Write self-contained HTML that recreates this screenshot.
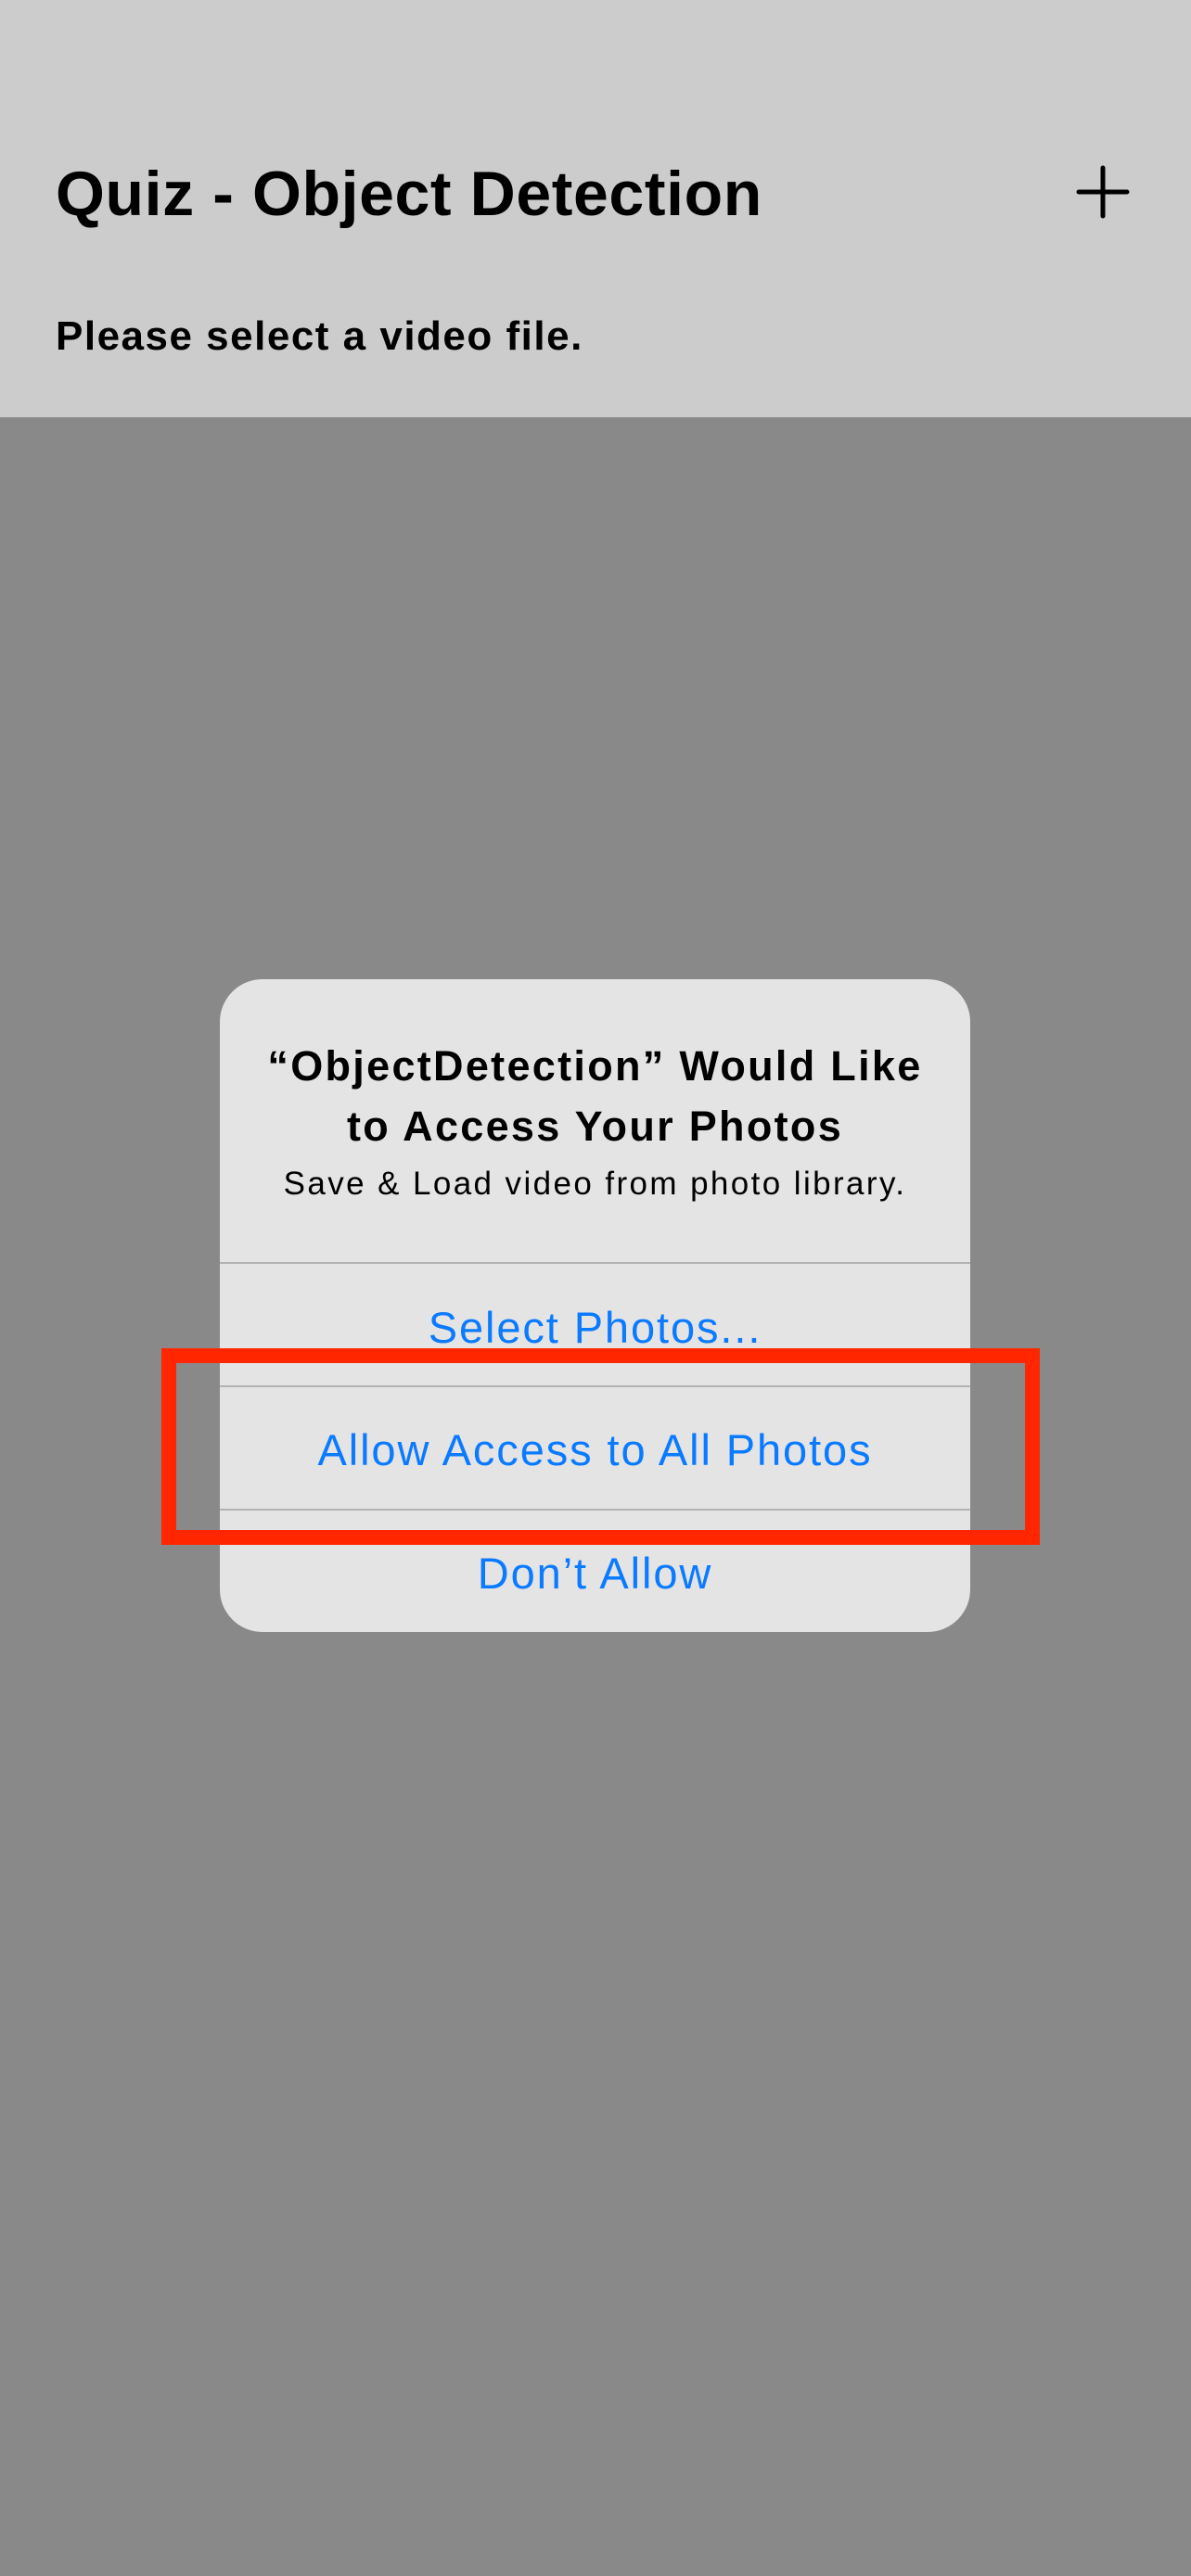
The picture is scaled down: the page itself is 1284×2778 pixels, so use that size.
<!DOCTYPE html>
<html><head><meta charset="utf-8"><style>
html,body{margin:0;padding:0;}
body{width:1284px;height:2778px;background:#898989;position:relative;overflow:hidden;font-family:"Liberation Sans",Arial,sans-serif;}
.t{position:absolute;line-height:1;white-space:nowrap;}
.c{left:237px;width:809px;text-align:center;}
</style></head><body>
<div style="position:absolute;left:0;top:0;width:1284px;height:450px;background:#cccccc;"></div>
<div class="t" style="left:60px;top:175px;font-size:68px;font-weight:bold;color:#000;letter-spacing:0.6px;">Quiz - Object Detection</div>
<svg style="position:absolute;left:1160px;top:178px" width="60" height="60"><path d="M29 3V55M3 29H55" stroke="#000" stroke-width="5" stroke-linecap="round"/></svg>
<div class="t" style="left:60px;top:341px;font-size:44px;font-weight:bold;color:#000;letter-spacing:1.5px;">Please select a video file.</div>

<div style="position:absolute;left:237px;top:1056px;width:809px;height:704px;background:#e4e4e4;border-radius:46px;"></div>
<div class="t c" style="top:1127px;font-size:45px;font-weight:bold;color:#000;letter-spacing:2.3px;">“ObjectDetection” Would Like</div>
<div class="t c" style="top:1192px;font-size:45px;font-weight:bold;color:#000;letter-spacing:2.3px;">to Access Your Photos</div>
<div class="t c" style="top:1259px;font-size:35px;color:#000;letter-spacing:2.4px;">Save &amp; Load video from photo library.</div>
<div style="position:absolute;left:237px;top:1361px;width:809px;height:2px;background:#b3b3b3;"></div>
<div style="position:absolute;left:237px;top:1494px;width:809px;height:2px;background:#b3b3b3;"></div>
<div style="position:absolute;left:237px;top:1627px;width:809px;height:2px;background:#b3b3b3;"></div>
<div class="t c" style="top:1408px;font-size:47px;color:#0a7aff;letter-spacing:1.9px;">Select Photos...</div>
<div class="t c" style="top:1540px;font-size:47px;color:#0a7aff;letter-spacing:1.9px;">Allow Access to All Photos</div>
<div class="t c" style="top:1673px;font-size:47px;color:#0a7aff;letter-spacing:1.9px;">Don’t Allow</div>
<div style="position:absolute;left:174px;top:1454px;width:915px;height:180px;border:16px solid #ff2600;"></div>
</body></html>
